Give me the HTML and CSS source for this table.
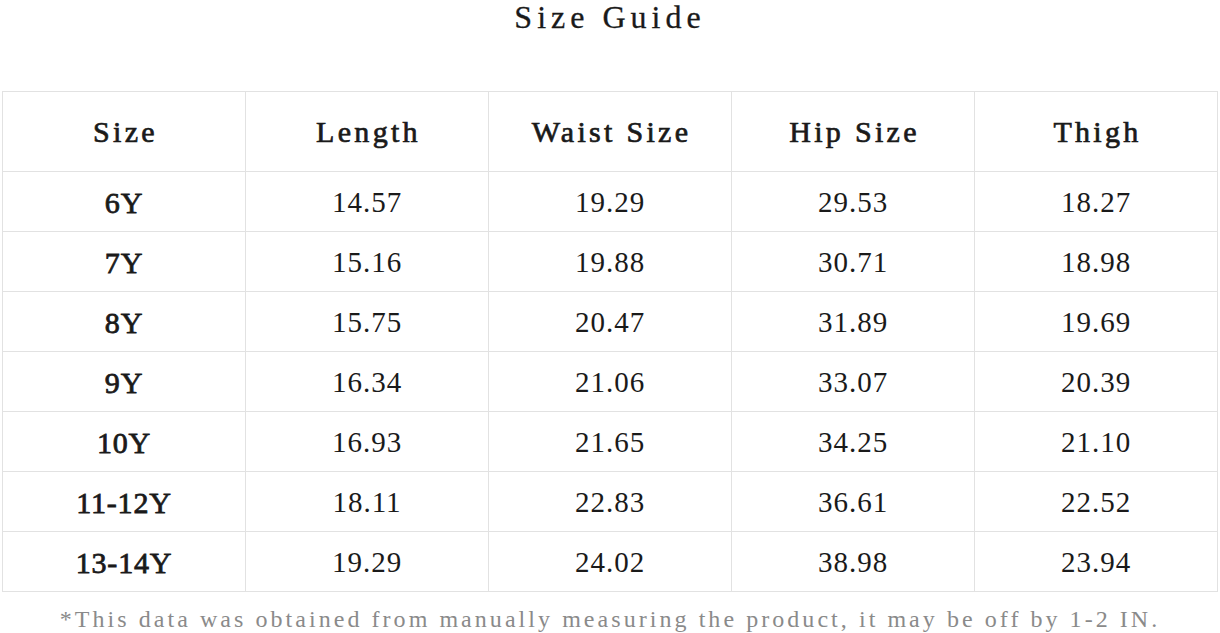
FILE: index.html
```html
<!DOCTYPE html>
<html>
<head>
<meta charset="utf-8">
<link rel="stylesheet" href="styles.css">
</head>
<body>
<div class="page">
  <h1 class="title">Size Guide</h1>
  <div class="guide">
    <div class="cell head">Size</div><div class="cell head">Length</div><div class="cell head">Waist Size</div><div class="cell head">Hip Size</div><div class="cell head">Thigh</div>
    <div class="cell sz">6Y</div><div class="cell">14.57</div><div class="cell">19.29</div><div class="cell">29.53</div><div class="cell">18.27</div>
    <div class="cell sz">7Y</div><div class="cell">15.16</div><div class="cell">19.88</div><div class="cell">30.71</div><div class="cell">18.98</div>
    <div class="cell sz">8Y</div><div class="cell">15.75</div><div class="cell">20.47</div><div class="cell">31.89</div><div class="cell">19.69</div>
    <div class="cell sz">9Y</div><div class="cell">16.34</div><div class="cell">21.06</div><div class="cell">33.07</div><div class="cell">20.39</div>
    <div class="cell sz">10Y</div><div class="cell">16.93</div><div class="cell">21.65</div><div class="cell">34.25</div><div class="cell">21.10</div>
    <div class="cell sz">11-12Y</div><div class="cell">18.11</div><div class="cell">22.83</div><div class="cell">36.61</div><div class="cell">22.52</div>
    <div class="cell sz">13-14Y</div><div class="cell">19.29</div><div class="cell">24.02</div><div class="cell">38.98</div><div class="cell">23.94</div>
  </div>
  <p class="note">*This data was obtained from manually measuring the product, it may be off by 1-2 IN.</p>
</div>
</body>
</html>
```

FILE: styles.css
```css
html, body {
  margin: 0;
  padding: 0;
  background: #fff;
}
body {
  font-family: "Liberation Serif", "DejaVu Serif", serif;
  color: #111;
}
.page {
  width: 1220px;
  height: 633px;
  display: flex;
  flex-direction: column;
}
.title {
  margin: 0;
  height: 91px;
  text-align: center;
  font-size: 32px;
  letter-spacing: 5px;
  font-weight: normal;
  line-height: 34px;
  color: #1a1a1a;
  -webkit-text-stroke: 0.3px #1a1a1a;
}
.guide {
  margin-left: 2px;
  display: grid;
  grid-template-columns: repeat(5, 243px);
  grid-template-rows: 80px repeat(7, 60px);
  width: 1216px;
  box-sizing: border-box;
  border-left: 1px solid #e2e2e2;
  border-top: 1px solid #e2e2e2;
}
.cell {
  box-sizing: border-box;
  border-right: 1px solid #e2e2e2;
  border-bottom: 1px solid #e2e2e2;
  display: flex;
  align-items: center;
  justify-content: center;
  font-size: 29px;
  letter-spacing: 1px;
  color: #1a1a1a;
  padding-top: 2px;
}
.cell.head {
  font-size: 30px;
  letter-spacing: 3.3px;
  padding-top: 0;
  padding-left: 3px;
  -webkit-text-stroke: 0.7px #1a1a1a;
}
.cell.sz {
  font-size: 30px;
  letter-spacing: 0.8px;
  -webkit-text-stroke: 0.8px #1a1a1a;
}
.note {
  margin: 0;
  padding-top: 13px;
  text-align: center;
  font-size: 24px;
  line-height: 28px;
  letter-spacing: 3.05px;
  color: #8a8a8a;
  white-space: nowrap;
}
```
